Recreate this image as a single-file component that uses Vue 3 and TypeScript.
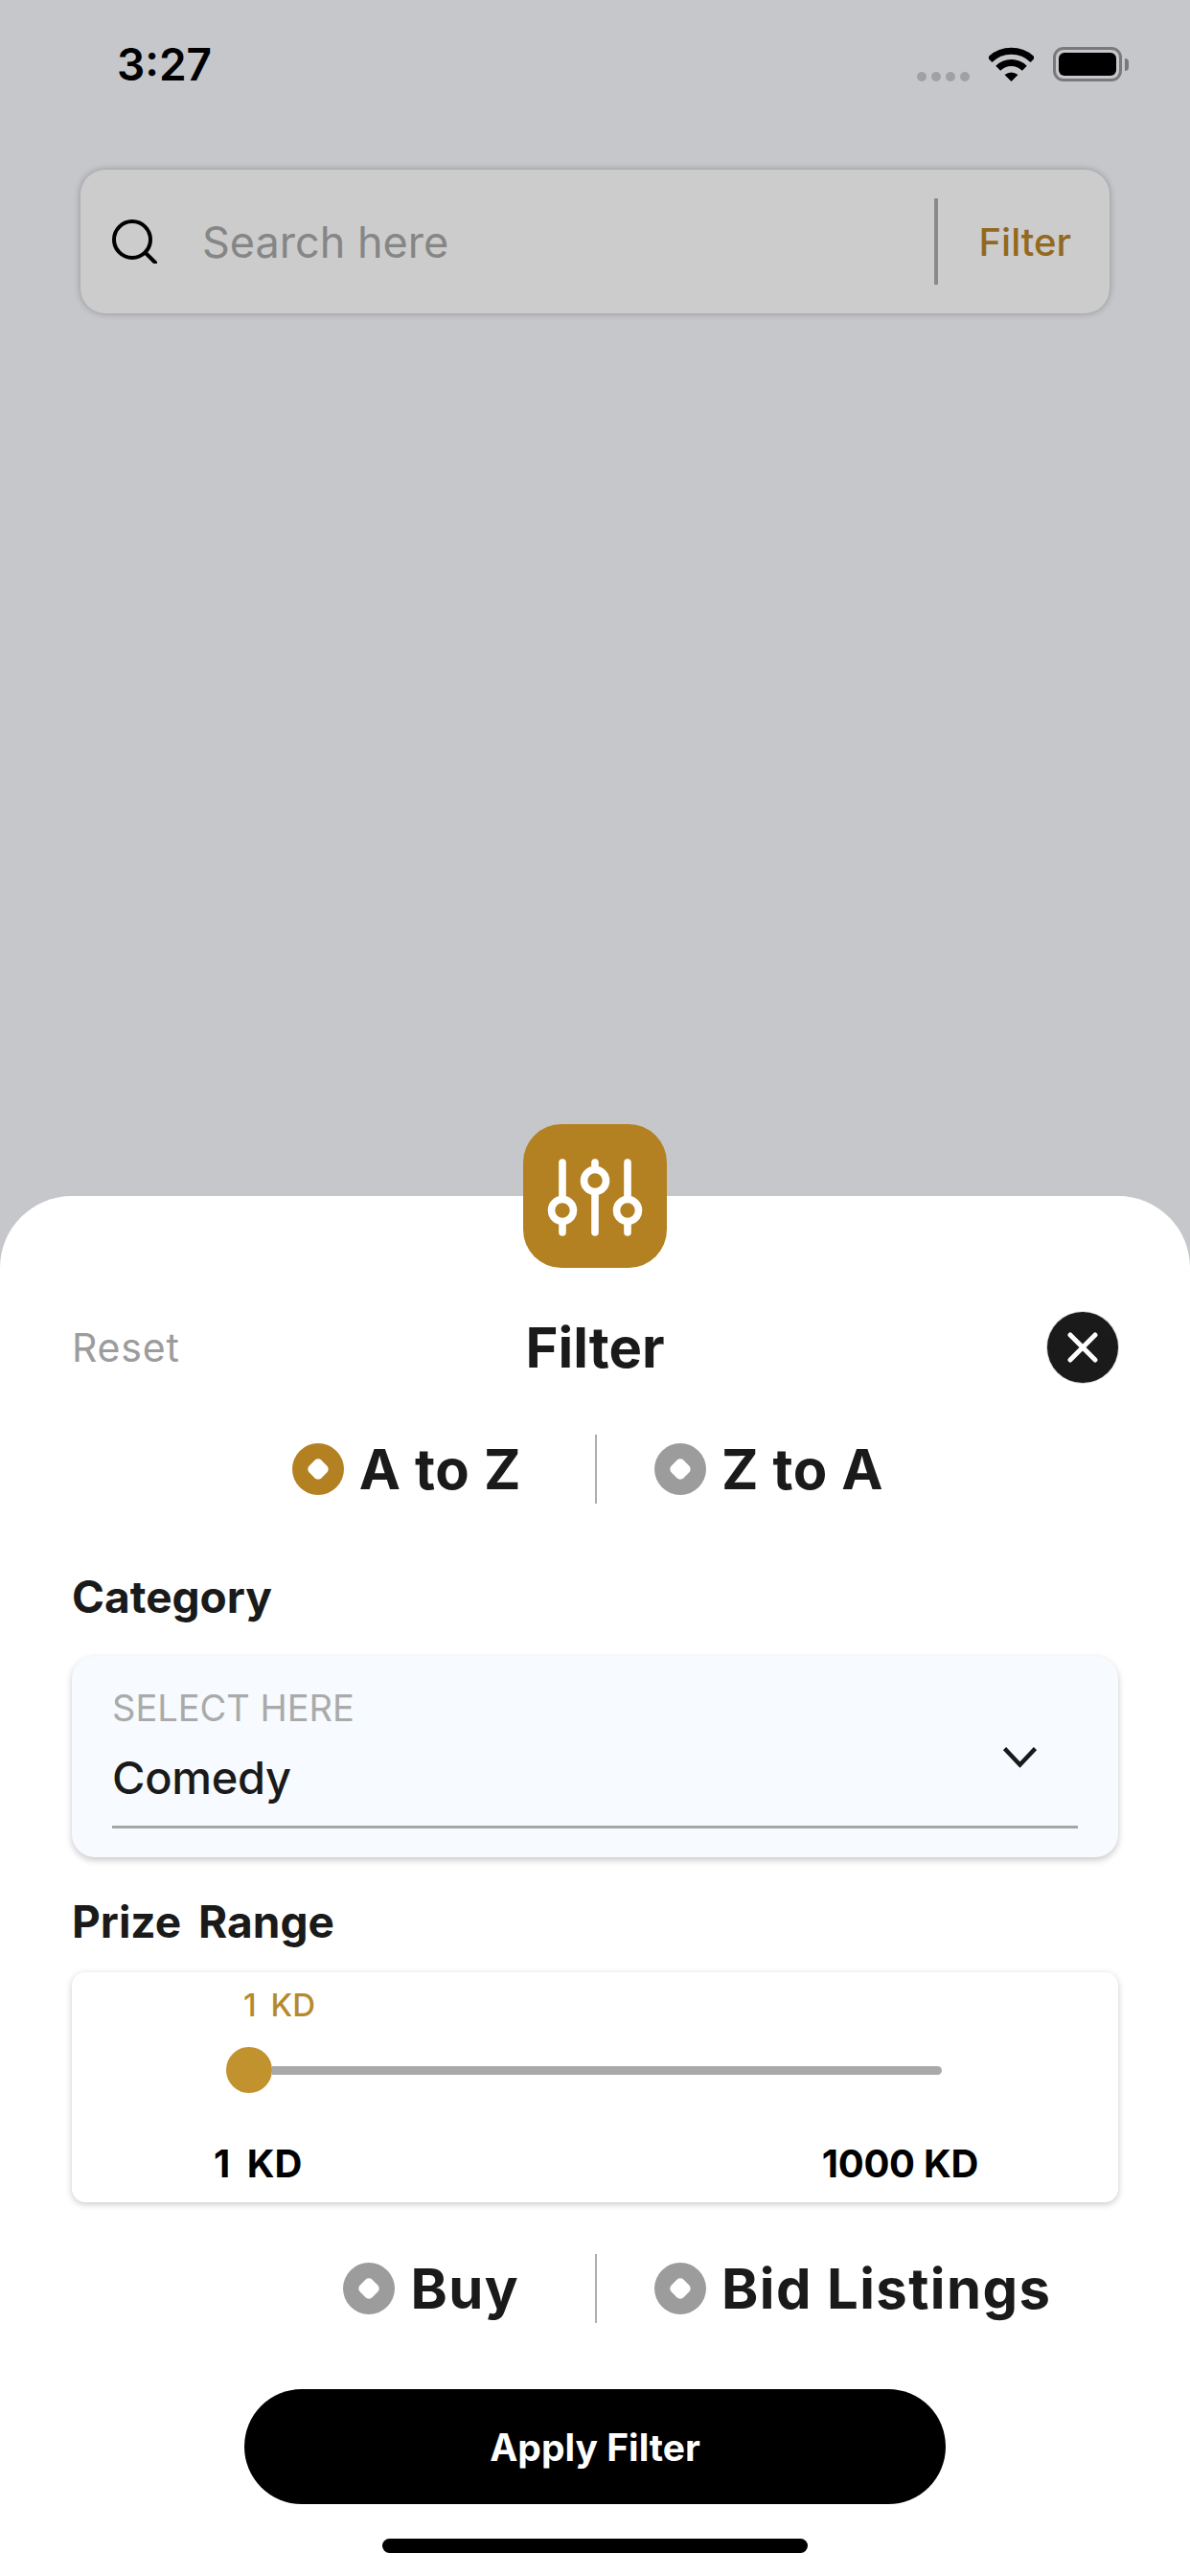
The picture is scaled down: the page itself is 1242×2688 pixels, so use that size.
<script setup lang="ts">
const sortOptions: { label: string; active: boolean }[] = [
  { label: 'A to Z', active: true },
  { label: 'Z to A', active: false },
]
const listingOptions: { label: string; active: boolean }[] = [
  { label: 'Buy', active: false },
  { label: 'Bid Listings', active: false },
]
</script>

<template>
  <div class="screen">
    <header class="status">
      <span class="time">3:27</span>
      <div class="status-icons">
        <div class="dots"><i></i><i></i><i></i><i></i></div>
        <svg class="wifi" width="47" height="36" viewBox="0 0 47 36" fill="none">
          <path d="M1 13.5A32 32 0 0 1 46 13.5" stroke="#000" stroke-width="7" />
          <path d="M9.7 22.2A19.5 19.5 0 0 1 37.3 22.2" stroke="#000" stroke-width="7" />
          <path d="M23.5 36L16.5 29Q23.5 24 30.5 29Z" fill="#000" />
        </svg>
        <div class="battery"><div class="battery-fill"></div></div>
        <div class="battery-cap"></div>
      </div>
    </header>

    <div class="search">
      <svg class="search-icon" width="47" height="46" viewBox="0 0 47 46" fill="none" stroke="#000" stroke-width="4" stroke-linecap="round">
        <circle cx="21" cy="21" r="19" />
        <path d="M35 35L45 45" />
      </svg>
      <span class="search-text">Search here</span>
      <span class="search-divider"></span>
      <span class="search-filter">Filter</span>
    </div>

    <section class="sheet">
      <div class="badge">
        <svg width="150" height="150" viewBox="0 0 150 150" fill="none" stroke="#fff" stroke-width="7.6" stroke-linecap="round">
          <path d="M41 40V77M41 102V113" />
          <circle cx="41" cy="90" r="11.5" />
          <path d="M75 40V47M75 71V113" />
          <circle cx="75" cy="59" r="11.5" />
          <path d="M109 40V77M109 102V113" />
          <circle cx="109" cy="90" r="11.5" />
        </svg>
      </div>

      <div class="sheet-head">
        <span class="reset">Reset</span>
        <h1 class="title">Filter</h1>
        <button class="close" type="button" aria-label="Close">
          <svg width="32" height="32" viewBox="0 0 32 32" stroke="#fff" stroke-width="5" stroke-linecap="round">
            <path d="M3 3L29 29M29 3L3 29" />
          </svg>
        </button>
      </div>

      <div class="choice sort">
        <div class="choice-item left">
          <span class="radio on"></span>
          <span class="choice-label">{{ sortOptions[0].label }}</span>
        </div>
        <span class="choice-divider"></span>
        <div class="choice-item right">
          <span class="radio"></span>
          <span class="choice-label">{{ sortOptions[1].label }}</span>
        </div>
      </div>

      <h2 class="section category">Category</h2>
      <div class="select-card">
        <div class="select-body">
          <div class="select-text">
            <span class="select-label">SELECT HERE</span>
            <span class="select-value">Comedy</span>
          </div>
          <svg class="chevron" width="35" height="22" viewBox="0 0 35 22" fill="none" stroke="#1a1a1a" stroke-width="4.5">
            <path d="M1.5 1.5L17.5 18.5L33.5 1.5" />
          </svg>
        </div>
      </div>

      <h2 class="section prize">Prize Range</h2>
      <div class="range-card">
        <div class="range-value">1 KD</div>
        <div class="slider">
          <span class="thumb"></span>
          <span class="track"></span>
        </div>
        <div class="range-ends">
          <span class="range-min">1 KD</span>
          <span class="range-max">1000 KD</span>
        </div>
      </div>

      <div class="choice listing">
        <div class="choice-item left">
          <span class="radio"></span>
          <span class="choice-label">{{ listingOptions[0].label }}</span>
        </div>
        <span class="choice-divider"></span>
        <div class="choice-item right">
          <span class="radio"></span>
          <span class="choice-label">{{ listingOptions[1].label }}</span>
        </div>
      </div>

      <button class="apply" type="button">Apply Filter</button>
      <div class="home-bar"></div>
    </section>
  </div>
</template>

<style scoped>
.screen {
  width: 1242px;
  height: 2688px;
  background: #c6c7cb;
  display: flex;
  flex-direction: column;
  overflow: hidden;
  font-family: Inter, "Liberation Sans", sans-serif;
  color: #1a1a1a;
}
.status {
  display: flex;
  justify-content: space-between;
  align-items: center;
  height: 36px;
  margin-top: 49px;
  padding: 0 64px 0 122px;
}
.time {
  font-size: 46px;
  line-height: 36px;
  font-weight: 600;
  color: #000;
}
.status-icons {
  display: flex;
  align-items: center;
  height: 36px;
}
.dots {
  display: flex;
  gap: 5px;
  align-self: flex-end;
  margin-right: 20px;
}
.dots i {
  width: 10px;
  height: 10px;
  border-radius: 50%;
  background: #a0a1a5;
}
.wifi {
  margin-right: 20px;
}
.battery {
  box-sizing: border-box;
  width: 72px;
  height: 36px;
  border: 3px solid #79797c;
  border-radius: 11px;
  padding: 3px;
}
.battery-fill {
  width: 100%;
  height: 100%;
  background: #000;
  border-radius: 6px;
}
.battery-cap {
  width: 4px;
  height: 13px;
  margin-left: 3px;
  background: #79797c;
  border-radius: 0 4px 4px 0;
}
.search {
  box-sizing: border-box;
  display: flex;
  align-items: center;
  width: 1074px;
  height: 150px;
  margin: 92px 0 0 84px;
  padding: 0 40px 0 33px;
  background: #cccccc;
  border-radius: 26px;
  box-shadow: 0 0 7px rgba(0, 0, 0, 0.28);
}
.search-icon {
  flex: none;
  margin-right: 47px;
}
.search-text {
  flex: 1;
  font-size: 45px;
  color: #868686;
}
.search-divider {
  flex: none;
  width: 4px;
  height: 90px;
  margin-right: 42px;
  background: #8a8a8a;
}
.search-filter {
  font-size: 40px;
  font-weight: 500;
  color: #93691d;
}
.sheet {
  position: relative;
  box-sizing: border-box;
  display: flex;
  flex-direction: column;
  margin-top: auto;
  height: 1440px;
  padding: 120px 75px 0;
  background: #fff;
  border-radius: 75px 75px 0 0;
}
.badge {
  position: absolute;
  top: -75px;
  left: 546px;
  width: 150px;
  height: 150px;
  background: #b38122;
  border-radius: 40px;
}
.badge svg {
  display: block;
}
.sheet-head {
  display: grid;
  grid-template-columns: 1fr auto 1fr;
  align-items: center;
  height: 75px;
}
.reset {
  font-size: 41px;
  letter-spacing: 0.8px;
  color: #9c9c9c;
}
.title {
  margin: 0;
  font-size: 58px;
  font-weight: 700;
}
.close {
  justify-self: end;
  display: flex;
  align-items: center;
  justify-content: center;
  width: 74px;
  height: 74px;
  padding: 0;
  border: none;
  border-radius: 50%;
  background: #1a1a1a;
  box-shadow: 0 0 0 1px #d8d8d8;
}
.choice {
  display: grid;
  grid-template-columns: 1fr 2px 1fr;
  align-items: center;
  height: 72px;
}
.sort {
  margin-top: 54px;
}
.listing {
  margin-top: 54px;
}
.choice-item {
  display: flex;
  align-items: center;
  gap: 16px;
}
.choice-item.left {
  justify-content: flex-end;
}
.sort .choice-item.left {
  padding-right: 76px;
}
.listing .choice-item.left {
  padding-right: 78px;
}
.choice-item.right {
  padding-left: 61px;
}
.choice-divider {
  width: 2px;
  height: 72px;
  margin-left: 1px;
  background: #aeaeae;
}
.choice-label {
  font-size: 58px;
  line-height: 72px;
  font-weight: 700;
}
.sort .choice-label {
  letter-spacing: 0.6px;
}
.listing .choice-label {
  letter-spacing: 1.4px;
}
.radio {
  flex: none;
  display: flex;
  align-items: center;
  justify-content: center;
  width: 54px;
  height: 54px;
  border-radius: 50%;
  background: #9c9c9c;
}
.radio.on {
  background: #b38122;
}
.radio::after {
  content: "";
  width: 18px;
  height: 18px;
  border-radius: 5px;
  background: #fff;
  transform: rotate(45deg);
}
.section {
  margin: 0;
  font-size: 46px;
  line-height: 56px;
  font-weight: 700;
}
.category {
  margin-top: 69px;
}
.prize {
  margin-top: 39px;
  word-spacing: 7px;
}
.select-card {
  box-sizing: border-box;
  height: 210px;
  margin-top: 34px;
  padding: 32px 42px 0;
  background: #f7faff;
  border-radius: 24px;
  box-shadow: 0 3px 7px rgba(0, 0, 0, 0.22);
}
.select-body {
  box-sizing: border-box;
  display: flex;
  justify-content: space-between;
  height: 148px;
  padding-right: 43px;
  border-bottom: 3px solid #a6a6a6;
}
.select-text {
  display: flex;
  flex-direction: column;
}
.select-label {
  font-size: 38px;
  line-height: 44px;
  color: #aaaaaa;
}
.select-value {
  margin-top: 22px;
  font-size: 47px;
  line-height: 58px;
  font-weight: 500;
  letter-spacing: -0.3px;
  color: #1a1a1a;
}
.chevron {
  margin-top: 63px;
}
.range-card {
  box-sizing: border-box;
  height: 240px;
  margin-top: 25px;
  padding-top: 14px;
  background: #fff;
  border-radius: 14px;
  box-shadow: 0 2px 7px rgba(0, 0, 0, 0.22);
}
.range-value {
  margin-left: 179px;
  font-size: 33px;
  line-height: 40px;
  font-weight: 500;
  word-spacing: 6px;
  color: #b58a2d;
}
.slider {
  display: flex;
  align-items: center;
  width: 747px;
  margin: 24px 0 0 161px;
}
.thumb {
  flex: none;
  width: 48px;
  height: 48px;
  border-radius: 50%;
  background: #c1922e;
}
.track {
  flex: 1;
  height: 9px;
  border-radius: 0 5px 5px 0;
  background: #a9a9a9;
}
.range-ends {
  display: flex;
  justify-content: space-between;
  margin-top: 49px;
  padding: 0 146px 0 148px;
  font-size: 40px;
  line-height: 50px;
  font-weight: 700;
  color: #000;
}
.range-min {
  word-spacing: 8px;
}
.range-max {
  letter-spacing: -0.3px;
}
.apply {
  align-self: center;
  flex: none;
  width: 732px;
  height: 120px;
  margin-top: 69px;
  padding: 0;
  border: none;
  border-radius: 60px;
  background: #000;
  color: #fff;
  font-family: inherit;
  font-size: 39px;
  font-weight: 700;
}
.home-bar {
  align-self: center;
  flex: none;
  width: 444px;
  height: 15px;
  margin-top: 36px;
  border-radius: 8px;
  background: #000;
}
</style>
